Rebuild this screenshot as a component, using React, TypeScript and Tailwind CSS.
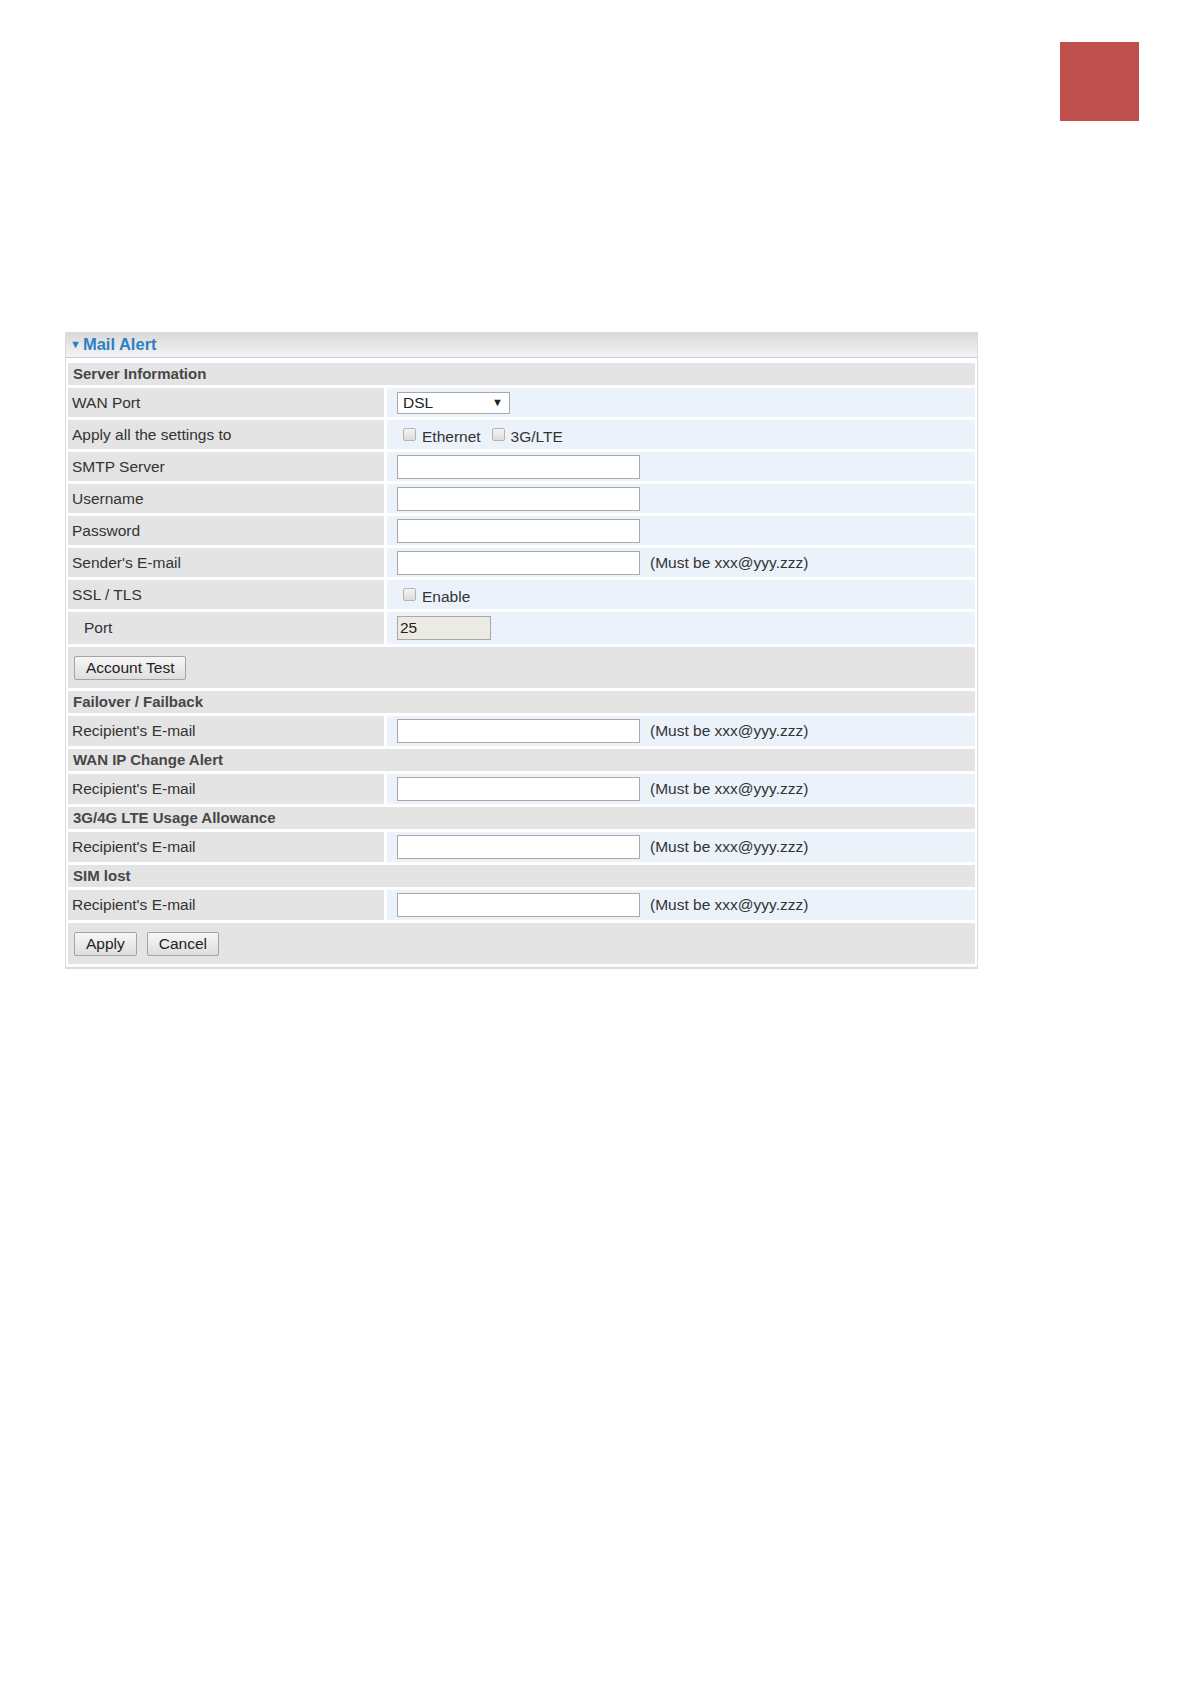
import React from 'react';

const font = "font-['Liberation_Sans',Arial,sans-serif]";

function TextBox() {
    return <div className="h-[24px] w-[243px] border border-[#a9a9a9] bg-white" />;
}

function Check({ label }: { label: string }) {
    return (
        <span className="flex items-center gap-[6px]">
            <span className="mb-[5px] h-[13px] w-[13px] rounded-[2px] border border-[#b4b4b4] bg-gradient-to-b from-[#f4f4f4] to-[#dcdcdc]" />
            <span>{label}</span>
        </span>
    );
}

function Btn({ children }: { children: React.ReactNode }) {
    return (
        <button className="h-[24px] rounded-[2px] border border-[#a3a3a3] bg-gradient-to-b from-[#f7f7f7] to-[#dedede] px-[11px] text-[15.5px] leading-none text-[#222]">
            {children}
        </button>
    );
}

function Section({ title }: { title: string }) {
    return <div className="flex h-[22px] items-center bg-[#e4e4e4] pl-[5px] text-[15px] font-bold text-[#474747]">{title}</div>;
}

function Row({ label, indent, h = 'h-[29px]', children }: { label: string; indent?: boolean; h?: string; children?: React.ReactNode }) {
    return (
        <div className={`grid grid-cols-[316px_1fr] gap-[3px] ${h}`}>
            <div className={`flex items-center bg-[#e4e4e4] text-[15.5px] text-[#333] ${indent ? 'pl-[16px]' : 'pl-[4px]'}`}>{label}</div>
            <div className="flex items-center gap-[10px] bg-[#ecf2fa] pl-[10px] text-[15.5px] text-[#333]">{children}</div>
        </div>
    );
}

function Recipient() {
    return (
        <Row label="Recipient's E-mail" h="h-[30px]">
            <TextBox />
            <span>(Must be xxx@yyy.zzz)</span>
        </Row>
    );
}

export default function App() {
    return (
        <div className={`min-h-[1684px] bg-white pt-[42px] ${font}`}>
            <div className="flex justify-end pr-[52px]">
                <div className="h-[79px] w-[79px] bg-[#c0504d]" />
            </div>

            <div className="ml-[65px] mt-[211px] w-[913px] border-x border-b-2 border-[#dcdcdc]">
                <div className="flex h-[26px] items-center gap-[2px] border-b border-[#b9d3ec] bg-gradient-to-b from-[#d9d9d9] to-[#f3f3f3] pl-[4px] text-[16.5px] font-bold text-[#2b80c2]">
                    <span className="text-[11px] leading-none">▼</span>
                    <span>Mail Alert</span>
                </div>

                <div className="flex flex-col gap-[3px] px-[2px] pb-[3px] pt-[5px]">
                    <Section title="Server Information" />
                    <Row label="WAN Port">
                        <div className="flex h-[22px] w-[113px] items-center justify-between border border-[#a9a9a9] bg-white pl-[5px] pr-[6px] text-[15.5px] text-[#222]">
                            <span>DSL</span>
                            <span className="text-[11px]">▼</span>
                        </div>
                    </Row>
                    <Row label="Apply all the settings to">
                        <div className="flex items-center gap-[11px] pl-[6px] pt-[4px]">
                            <Check label="Ethernet" />
                            <Check label="3G/LTE" />
                        </div>
                    </Row>
                    <Row label="SMTP Server"><TextBox /></Row>
                    <Row label="Username"><TextBox /></Row>
                    <Row label="Password"><TextBox /></Row>
                    <Row label="Sender's E-mail">
                        <TextBox />
                        <span>(Must be xxx@yyy.zzz)</span>
                    </Row>
                    <Row label="SSL / TLS">
                        <div className="pl-[6px] pt-[4px]"><Check label="Enable" /></div>
                    </Row>
                    <Row label="Port" indent h="h-[32px]">
                        <div className="flex h-[24px] w-[94px] items-center border border-[#a9a9a9] bg-[#ebebe4] pl-[2px] text-[15.5px] text-[#222]">25</div>
                    </Row>
                    <div className="flex h-[41px] items-center bg-[#e4e4e4] pl-[6px]">
                        <Btn>Account Test</Btn>
                    </div>

                    <Section title="Failover / Failback" />
                    <Recipient />
                    <Section title="WAN IP Change Alert" />
                    <Recipient />
                    <Section title="3G/4G LTE Usage Allowance" />
                    <Recipient />
                    <Section title="SIM lost" />
                    <Recipient />
                    <div className="flex h-[41px] items-center gap-[10px] bg-[#e4e4e4] pl-[6px]">
                        <Btn>Apply</Btn>
                        <Btn>Cancel</Btn>
                    </div>
                </div>
            </div>
        </div>
    );
}
